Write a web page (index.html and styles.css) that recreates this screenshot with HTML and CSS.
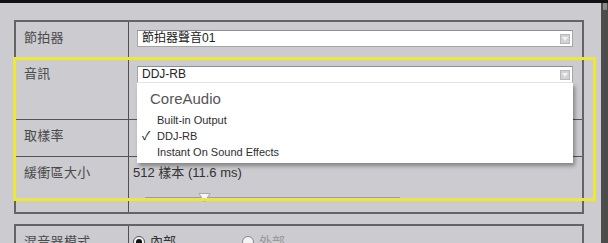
FILE: index.html
```html
<!DOCTYPE html>
<html lang="zh-Hant">
<head>
<meta charset="utf-8">
<title>Audio Preferences</title>
<link rel="stylesheet" href="styles.css">
</head>
<body>
<div class="screen">
  <div class="topbar"></div>
  <div class="body">
    <div class="main">
      <div class="panel">
        <div class="label row1">節拍器</div>
        <div class="value row1">
          <div class="select"><span>節拍器聲音01</span><span class="arrow"></span></div>
        </div>

        <div class="label row2">音訊</div>
        <div class="value row2">
          <div class="select open"><span>DDJ-RB</span><span class="arrow"></span>
            <div class="menu">
              <div class="menu-head">CoreAudio</div>
              <div class="menu-item">Built-in Output</div>
              <div class="menu-item checked"><span class="check">✓</span>DDJ-RB</div>
              <div class="menu-item">Instant On Sound Effects</div>
            </div>
          </div>
        </div>

        <div class="label row3">取樣率</div>
        <div class="value row3"></div>

        <div class="label row4">緩衝區大小</div>
        <div class="value row4">
          <div class="buffer-text">512 樣本 (11.6 ms)</div>
          <div class="slider">
            <svg class="thumb" width="13" height="11" viewBox="0 0 13 11"><path d="M1 1.5 H12 L6.5 10 Z" fill="#f6f6f6" stroke="#a8a8a8" stroke-width="1"/></svg>
          </div>
        </div>
      </div>

      <div class="panel panel2">
        <div class="label">混音器模式</div>
        <div class="value radios">
          <span class="radio on"></span><span class="radio-text">內部</span>
          <span class="radio off"></span><span class="radio-text dim">外部</span>
        </div>
      </div>

      <div class="highlight"></div>
    </div>
    <div class="scrollbar"><div class="sb-cap"></div></div>
  </div>
</div>
</body>
</html>
```

FILE: styles.css
```css
* { box-sizing: border-box; }
html, body { margin: 0; padding: 0; }
body {
  width: 608px;
  height: 243px;
  overflow: hidden;
  background: #cbcbd0;
  font-family: "Liberation Sans", "Noto Sans CJK TC", sans-serif;
  color: #444;
}
.screen { width: 608px; height: 243px; display: flex; flex-direction: column; overflow: hidden; }
.topbar { height: 3px; background: #121212; flex: none; }
.body { flex: 1; display: flex; min-height: 0; }
.main {
  position: relative;
  width: 601px;
  padding: 17px 0 0 14px;
  background: #cbcbd0;
}
.scrollbar { flex: 1; background: #4c4c4c; position: relative; }
.sb-cap { height: 7px; margin: 0 1px 0 2px; background: #8a8a8a; border-radius: 1px; }

.panel {
  width: 570px;
  display: grid;
  grid-template-columns: 113px 1fr;
  grid-template-rows: 36px 62px 37px 55px;
  border: 2px solid #646464;
}
.label {
  border-right: 1px solid #505050;
  padding: 8px 0 0 8px;
  font-size: 13px;
  line-height: 16px;
  color: #4a4a4a;
  letter-spacing: 0.3px;
}
.value { padding: 8px 9px 0 8px; }
.row1, .row2, .row3 { border-bottom: 1px solid #555; }

.select {
  position: relative;
  height: 17px;
  background: #fff;
  border: 1px solid #a6a6a6;
  border-top-color: #8e8e8e;
  display: flex;
  align-items: center;
  justify-content: space-between;
  padding: 0 2px 0 4px;
  font-size: 12px;
  color: #222;
  line-height: 15px;
}
.select .arrow {
  width: 10px;
  height: 10px;
  background: #d2d2d4;
  border: 1px solid #b8b8bb;
  position: relative;
}
.select .arrow::after {
  content: "";
  position: absolute;
  left: 1px;
  top: 2px;
  border-left: 3px solid transparent;
  border-right: 3px solid transparent;
  border-top: 4px solid #f4f4f4;
}
.select.open { border-bottom-color: #e8e8e8; }

.menu {
  position: absolute;
  left: -1px;
  right: -1px;
  top: 16px;
  height: 80px;
  background: #fff;
  box-shadow: 2px 3px 4px rgba(0, 0, 0, 0.35);
  padding: 6px 0 0 0;
  z-index: 2;
}
.menu-head {
  font-size: 15px;
  line-height: 20px;
  color: #555;
  padding-left: 13px;
  margin-bottom: 3px;
}
.menu-item {
  position: relative;
  font-size: 11px;
  line-height: 16px;
  color: #2e2e2e;
  padding-left: 20px;
}
.check {
  position: absolute;
  left: 5px;
  top: 0;
  font-size: 12px;
  color: #222;
}

.row4.value { padding: 8px 0 0 4px; }
.buffer-text { font-size: 13px; line-height: 16px; color: #333; }
.slider {
  position: relative;
  width: 255px;
  height: 12px;
  margin: 10px 0 0 12px;
  background: linear-gradient(#9e9e9e, #9e9e9e) 0 6px / 100% 2px no-repeat;
}
.thumb { position: absolute; left: 53px; top: 1px; }

.panel2 {
  margin-top: 10px;
  grid-template-rows: 40px;
}
.radios {
  padding: 8px 0 0 4px;
  display: flex;
  align-items: flex-start;
  font-size: 13px;
  color: #333;
}
.radio {
  width: 12px;
  height: 12px;
  margin-top: 2px;
  border-radius: 50%;
  border: 1px solid #555;
  background: #f4f4f4;
  position: relative;
  flex: none;
}
.radio.on::after {
  content: "";
  position: absolute;
  left: 2px; top: 2px;
  width: 6px; height: 6px;
  border-radius: 50%;
  background: #111;
}
.radio.off { border-color: #888; margin-left: 66px; }
.radio-text { margin-left: 5px; line-height: 16px; }
.dim { color: #999; }

.highlight {
  position: absolute;
  left: 13px;
  top: 54px;
  width: 583px;
  height: 144px;
  border: 3px solid #efe63a;
  pointer-events: none;
  z-index: 3;
}
```
